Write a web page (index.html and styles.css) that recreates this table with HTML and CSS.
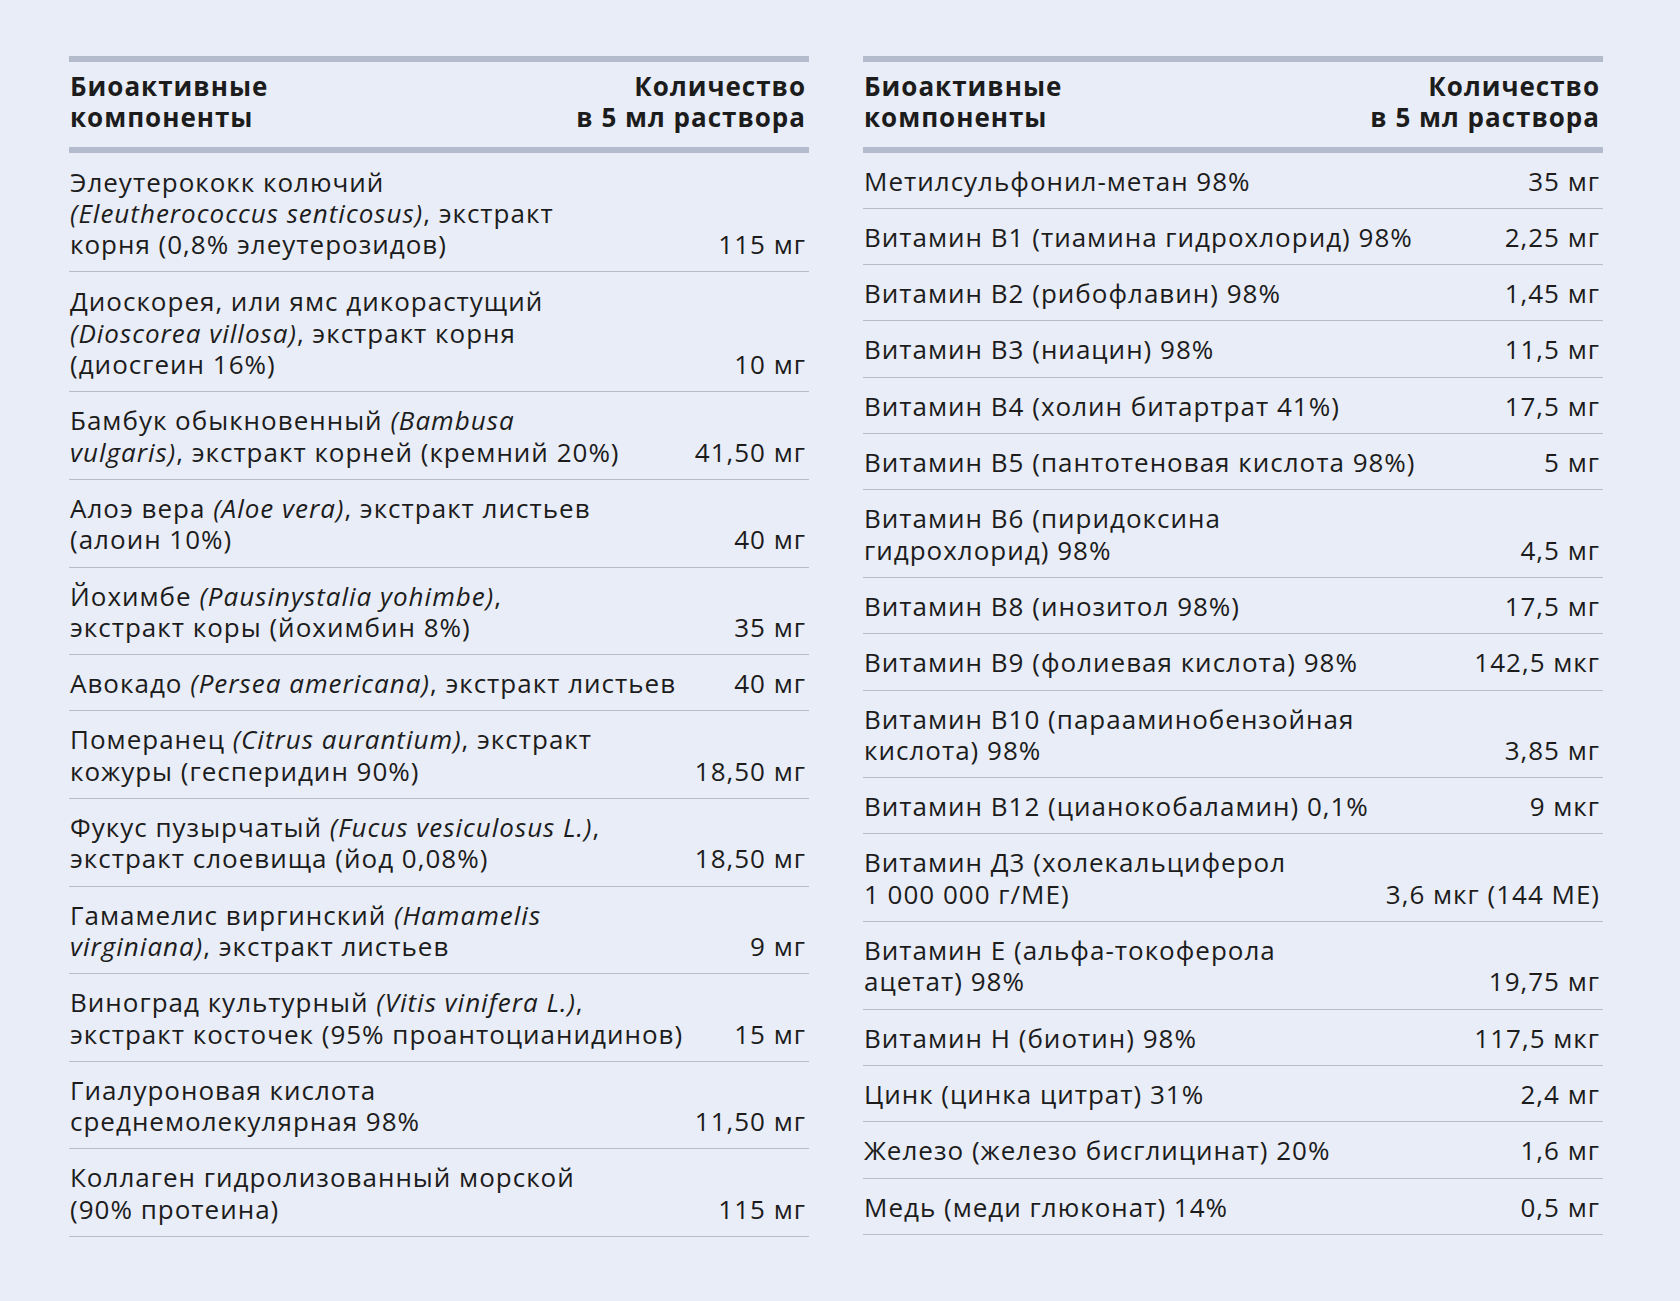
FILE: index.html
```html
<!DOCTYPE html>
<html lang="ru">
<head>
<meta charset="utf-8">
<title>Состав</title>
<link rel="stylesheet" href="styles.css">
</head>
<body>
<main class="page">
  <section class="table">
    <div class="head">
      <div class="name">Биоактивные<br>компоненты</div>
      <div class="amount">Количество<br>в 5 мл раствора</div>
    </div>
    <div class="row row-tall"><div class="name">Элеутерококк колючий<br><i>(Eleutherococcus senticosus)</i>, экстракт<br>корня (0,8% элеутерозидов)</div><div class="amount">115 мг</div></div>
    <div class="row row-tall"><div class="name">Диоскорея, или ямс дикорастущий<br><i>(Dioscorea villosa)</i>, экстракт корня<br>(диосгеин 16%)</div><div class="amount">10 мг</div></div>
    <div class="row"><div class="name">Бамбук обыкновенный <i>(Bambusa<br>vulgaris)</i>, экстракт корней (кремний 20%)</div><div class="amount">41,50 мг</div></div>
    <div class="row"><div class="name">Алоэ вера <i>(Aloe vera)</i>, экстракт листьев<br>(алоин 10%)</div><div class="amount">40 мг</div></div>
    <div class="row"><div class="name">Йохимбе <i>(Pausinystalia yohimbe)</i>,<br>экстракт коры (йохимбин 8%)</div><div class="amount">35 мг</div></div>
    <div class="row"><div class="name">Авокадо <i>(Persea americana)</i>, экстракт листьев</div><div class="amount">40 мг</div></div>
    <div class="row"><div class="name">Померанец <i>(Citrus aurantium)</i>, экстракт<br>кожуры (гесперидин 90%)</div><div class="amount">18,50 мг</div></div>
    <div class="row"><div class="name">Фукус пузырчатый <i>(Fucus vesiculosus L.)</i>,<br>экстракт слоевища (йод 0,08%)</div><div class="amount">18,50 мг</div></div>
    <div class="row"><div class="name">Гамамелис виргинский <i>(Hamamelis<br>virginiana)</i>, экстракт листьев</div><div class="amount">9 мг</div></div>
    <div class="row"><div class="name">Виноград культурный <i>(Vitis vinifera L.)</i>,<br>экстракт косточек (95% проантоцианидинов)</div><div class="amount">15 мг</div></div>
    <div class="row"><div class="name">Гиалуроновая кислота<br>среднемолекулярная 98%</div><div class="amount">11,50 мг</div></div>
    <div class="row"><div class="name">Коллаген гидролизованный морской<br>(90% протеина)</div><div class="amount">115 мг</div></div>
  </section>
  <section class="table">
    <div class="head">
      <div class="name">Биоактивные<br>компоненты</div>
      <div class="amount">Количество<br>в 5 мл раствора</div>
    </div>
    <div class="row"><div class="name">Метилсульфонил-метан 98%</div><div class="amount">35 мг</div></div>
    <div class="row"><div class="name">Витамин В1 (тиамина гидрохлорид) 98%</div><div class="amount">2,25 мг</div></div>
    <div class="row"><div class="name">Витамин В2 (рибофлавин) 98%</div><div class="amount">1,45 мг</div></div>
    <div class="row"><div class="name">Витамин В3 (ниацин) 98%</div><div class="amount">11,5 мг</div></div>
    <div class="row"><div class="name">Витамин В4 (холин битартрат 41%)</div><div class="amount">17,5 мг</div></div>
    <div class="row"><div class="name">Витамин В5 (пантотеновая кислота 98%)</div><div class="amount">5 мг</div></div>
    <div class="row"><div class="name">Витамин В6 (пиридоксина<br>гидрохлорид) 98%</div><div class="amount">4,5 мг</div></div>
    <div class="row"><div class="name">Витамин В8 (инозитол 98%)</div><div class="amount">17,5 мг</div></div>
    <div class="row"><div class="name">Витамин В9 (фолиевая кислота) 98%</div><div class="amount">142,5 мкг</div></div>
    <div class="row"><div class="name">Витамин В10 (парааминобензойная<br>кислота) 98%</div><div class="amount">3,85 мг</div></div>
    <div class="row"><div class="name">Витамин В12 (цианокобаламин) 0,1%</div><div class="amount">9 мкг</div></div>
    <div class="row"><div class="name">Витамин Д3 (холекальциферол<br>1 000 000 г/МЕ)</div><div class="amount">3,6 мкг (144 МЕ)</div></div>
    <div class="row"><div class="name">Витамин Е (альфа-токоферола<br>ацетат) 98%</div><div class="amount">19,75 мг</div></div>
    <div class="row"><div class="name">Витамин Н (биотин) 98%</div><div class="amount">117,5 мкг</div></div>
    <div class="row"><div class="name">Цинк (цинка цитрат) 31%</div><div class="amount">2,4 мг</div></div>
    <div class="row"><div class="name">Железо (железо бисглицинат) 20%</div><div class="amount">1,6 мг</div></div>
    <div class="row"><div class="name">Медь (меди глюконат) 14%</div><div class="amount">0,5 мг</div></div>
  </section>
</main>
</body>
</html>
```

FILE: styles.css
```css
html, body {
  margin: 0;
  padding: 0;
  background: #e9edf7;
}

body {
  font-family: "Open Sans", "Noto Sans", "Liberation Sans", sans-serif;
  font-size: 26px;
  line-height: 31.3px;
  letter-spacing: 1px;
  color: #1c1c1c;
}

.page {
  display: grid;
  grid-template-columns: 740px 740px;
  column-gap: 54px;
  align-items: start;
  padding: 56px 0 0 69px;
}

.table {
  display: flex;
  flex-direction: column;
}

.head {
  display: flex;
  justify-content: space-between;
  align-items: flex-end;
  border-top: 6px solid #b4bbcc;
  border-bottom: 6px solid #b4bbcc;
  padding: 9px 3px 13px 1px;
  font-weight: 700;
}

.head .amount {
  text-align: right;
}

.row {
  display: flex;
  justify-content: space-between;
  align-items: flex-end;
  gap: 12px;
  padding: 13px 3px 11px 1px;
  border-bottom: 1px solid #b7bcc7;
}

.row-tall {
  padding-top: 14px;
  padding-bottom: 11px;
}

.row .name {
  flex: 1 1 auto;
}

.row .amount {
  flex: 0 0 auto;
  text-align: right;
  white-space: nowrap;
}

i {
  font-style: italic;
}
```
